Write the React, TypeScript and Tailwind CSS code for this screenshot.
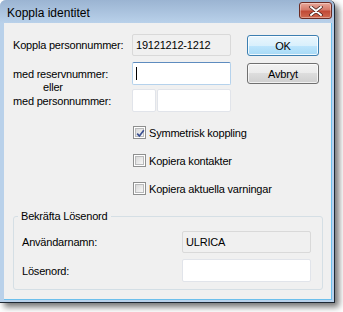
import React from "react";

function Field({ w, h = 22, readOnly = false, focused = false, children }: { w: number; h?: number; readOnly?: boolean; focused?: boolean; children?: React.ReactNode }) {
  const base = "flex items-center pl-[3px] rounded-[2px] border";
  const look = readOnly
    ? "bg-[#f0f0f0] border-[#d9d9d9]"
    : focused
    ? "bg-white border-[#b5d2ec] border-t-[#5e8cbf]"
    : "bg-white border-[#e1e4ea]";
  return (
    <div className={`${base} ${look}`} style={{ width: w, height: h }}>
      {children}
    </div>
  );
}

function Checkbox({ checked, label }: { checked?: boolean; label: string }) {
  return (
    <div className="flex items-center h-[15px] gap-[3px]">
      <div className="w-[13px] h-[13px] border border-[#8e8f8f] bg-white p-[1px]">
        <div className="relative w-full h-full border border-[#b9babb] bg-[linear-gradient(135deg,#d9d9d9,#f7f7f7)]">
          {checked && (
            <svg viewBox="0 0 9 9" className="absolute inset-0 w-[9px] h-[9px]">
              <path d="M1.2 4.6 L3.4 7 L7.8 1.2" fill="none" stroke="#3a4f91" strokeWidth="1.7" />
            </svg>
          )}
        </div>
      </div>
      <span>{label}</span>
    </div>
  );
}

function Button({ primary, children }: { primary?: boolean; children: React.ReactNode }) {
  const look = primary
    ? "border-[#3c7fb1] bg-[linear-gradient(#eaf6fd_0%,#d9f0fc_50%,#bee6fd_50%,#a7d9f5_100%)] shadow-[inset_0_0_0_1px_rgba(255,255,255,0.8)]"
    : "border-[#707070] bg-[linear-gradient(#f2f2f2_0%,#ebebeb_50%,#dddddd_50%,#cfcfcf_100%)] shadow-[inset_0_0_0_1px_rgba(255,255,255,0.7)]";
  return (
    <div className={`w-[72px] h-[21px] flex items-center justify-center rounded-[3px] border ${look}`}>
      {children}
    </div>
  );
}

export default function App() {
  return (
    <div className="w-[343px] h-[312px] bg-white font-['Liberation_Sans',Arial,sans-serif] text-[11px] leading-[14px] text-black tracking-[-0.2px]">
      <div className="w-[335px] h-[303px] flex flex-col rounded-t-[6px] border-r border-b border-[#1d2733] bg-[#b9d1ea] shadow-[4px_4px_6px_rgba(0,0,0,0.55)]">
        {/* Title bar */}
        <div className="h-[23px] flex items-center justify-between pl-[7px] pr-[2px] rounded-t-[6px] bg-[linear-gradient(#9bb4d2,#b9d1ea)]">
          <span className="text-[12px] tracking-normal pt-[2px]">Koppla identitet</span>
          <div className="w-[33px] h-[17px] -mt-[2px] flex items-center justify-center rounded-[3px] border border-[#6b2c24] bg-[linear-gradient(#e9a99b_0%,#d47a6a_45%,#c14a36_55%,#cf6a50_100%)] shadow-[inset_0_0_0_1px_rgba(255,255,255,0.35)]">
            <svg viewBox="0 0 14 10" className="w-[14px] h-[10px]">
              <path d="M2 1 L12 9 M12 1 L2 9" stroke="#3b1a16" strokeWidth="3.4" strokeLinecap="round" />
              <path d="M2 1 L12 9 M12 1 L2 9" stroke="#ffffff" strokeWidth="2" strokeLinecap="round" />
            </svg>
          </div>
        </div>

        {/* Client area */}
        <div className="flex-1 ml-[4px] mr-[2px] mb-[2px] bg-[#f0f0f0] border-r border-b border-[#6cbfec] pl-[9px] pt-[11px]">
          <div className="flex">
            <div className="flex flex-col">
              <div className="flex items-center h-[22px]">
                <div className="w-[119px]">Koppla personnummer:</div>
                <Field w={99} readOnly>19121212-1212</Field>
              </div>
              <div className="flex items-center h-[23px] mt-[6px]">
                <div className="w-[119px]">med reservnummer:</div>
                <Field w={99} h={23} focused>
                  <span className="w-px h-[13px] bg-black" />
                </Field>
              </div>
              <div className="flex items-start h-[23px] mt-[4px]">
                <div className="w-[119px] -mt-[9px] flex flex-col">
                  <span className="pl-[30px]">eller</span>
                  <span>med personnummer:</span>
                </div>
                <div className="flex gap-[1px]">
                  <Field w={24} h={23} />
                  <Field w={74} h={23} />
                </div>
              </div>
            </div>
            <div className="ml-[16px] mt-[1px] flex flex-col gap-[7px]">
              <Button primary>OK</Button>
              <Button>Avbryt</Button>
            </div>
          </div>

          <div className="mt-[13px] ml-[120px] flex flex-col gap-[13px]">
            <Checkbox checked label="Symmetrisk koppling" />
            <Checkbox label="Kopiera kontakter" />
            <Checkbox label="Kopiera aktuella varningar" />
          </div>

          <fieldset className="mt-[13px] w-[310px] border border-[#d5dfe5] rounded-[3px] px-[4px] pb-[7px]">
            <legend className="px-[3px] leading-[14px]">Bekräfta Lösenord</legend>
            <div className="mt-[8px] pl-[4px] flex flex-col gap-[6px]">
              <div className="flex items-center h-[22px]">
                <div className="w-[160px]">Användarnamn:</div>
                <Field w={129} readOnly>ULRICA</Field>
              </div>
              <div className="flex items-center h-[23px]">
                <div className="w-[160px]">Lösenord:</div>
                <Field w={129} h={23} />
              </div>
            </div>
          </fieldset>
        </div>
      </div>
    </div>
  );
}
